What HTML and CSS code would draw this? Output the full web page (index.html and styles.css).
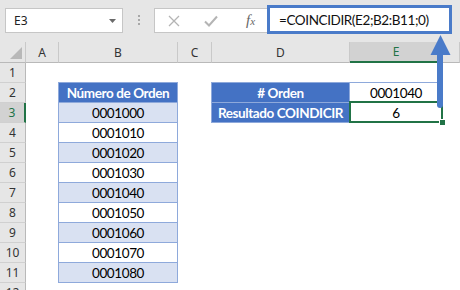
FILE: index.html
```html
<!doctype html>
<html lang="es">
  <head>
    <meta charset="utf-8">
    <title>COINCIDIR</title>
    <link rel="stylesheet" href="styles.css">
  </head>
  <body>
    <div class="excel">
      <div class="toolbar">
        <div class="namebox">
          <span>E3</span>
          <svg class="caret" width="7" height="4" viewBox="0 0 7 4"><path d="M0 0h7L3.5 4z" fill="#6a6a6a"/></svg>
        </div>
        <div class="grip"><i></i><i></i><i></i></div>
        <div class="fx-buttons">
          <svg width="12" height="12" viewBox="0 0 12 12"><path d="M1 1l10 10M11 1L1 11" stroke="#b4b4b4" stroke-width="1.3" fill="none"/></svg>
          <svg width="14" height="12" viewBox="0 0 14 12"><path d="M1 6.5l4 4L13 1.5" stroke="#b4b4b4" stroke-width="2" fill="none"/></svg>
          <span class="fx">f<sub>x</sub></span>
        </div>
        <div class="formula">=COINCIDIR(E2;B2:B11;0)</div>
      </div>

      <div class="sheet">
        <div class="ch corner"><svg width="12" height="12" viewBox="0 0 12 12"><path d="M12 0v12H0z" fill="#b8b8b8"/></svg></div>
        <div class="ch">A</div>
        <div class="ch">B</div>
        <div class="ch">C</div>
        <div class="ch">D</div>
        <div class="ch sel">E</div>
        <div class="ch"></div>

        <div class="rh">1</div><div></div><div></div><div></div><div></div><div></div><div></div>

        <div class="rh">2</div><div></div>
        <div class="t th top">Número de Orden</div>
        <div></div>
        <div class="t th top">#&nbsp;Orden</div>
        <div class="t top">0001040</div>
        <div></div>

        <div class="rh sel">3</div><div></div>
        <div class="t band">0001000</div>
        <div></div>
        <div class="t th">Resultado COINDICIR</div>
        <div class="t active">6</div>
        <div></div>

        <div class="rh">4</div><div></div><div class="t">0001010</div><div></div><div></div><div></div><div></div>
        <div class="rh">5</div><div></div><div class="t band">0001020</div><div></div><div></div><div></div><div></div>
        <div class="rh">6</div><div></div><div class="t">0001030</div><div></div><div></div><div></div><div></div>
        <div class="rh">7</div><div></div><div class="t band">0001040</div><div></div><div></div><div></div><div></div>
        <div class="rh">8</div><div></div><div class="t">0001050</div><div></div><div></div><div></div><div></div>
        <div class="rh">9</div><div></div><div class="t band">0001060</div><div></div><div></div><div></div><div></div>
        <div class="rh">10</div><div></div><div class="t">0001070</div><div></div><div></div><div></div><div></div>
        <div class="rh">11</div><div></div><div class="t band">0001080</div><div></div><div></div><div></div><div></div>
        <div class="rh">12</div><div></div><div></div><div></div><div></div><div></div><div></div>
      </div>

      <!-- annotation arrow pointing from the result up to the formula -->
      <svg class="arrow" width="24" height="74" viewBox="0 0 24 74">
        <path d="M10.5 0L20.5 20H0.5z" fill="#4a7bc9"/>
        <path d="M10 19v51" stroke="#4a7bc9" stroke-width="6" stroke-linecap="round"/>
      </svg>
    </div>
  </body>
</html>
```

FILE: styles.css
```css
body {
  margin: 0;
  font-family: Lato, "Liberation Sans", sans-serif;
}
.excel {
  position: relative;
  width: 460px;
  height: 290px;
  overflow: hidden;
  background: #fff;
}
.toolbar {
  display: flex;
  align-items: flex-start;
  height: 42px;
  background: #e6e6e6;
}
.namebox {
  display: flex;
  align-items: center;
  justify-content: space-between;
  box-sizing: border-box;
  width: 118px;
  height: 25px;
  margin: 8px 0 0 5px;
  padding: 0 6px 0 8px;
  background: #fff;
  border: 1px solid #c6c6c6;
  font-family: "Noto Sans", sans-serif;
  font-size: 12px;
  color: #222;
}
.grip {
  display: flex;
  flex-direction: column;
  align-items: center;
  gap: 2px;
  width: 31px;
  margin-top: 15px;
}
.grip i {
  width: 2px;
  height: 2px;
  background: #a8a8a8;
}
.fx-buttons {
  display: flex;
  align-items: center;
  box-sizing: border-box;
  width: 113px;
  height: 25px;
  margin-top: 8px;
  padding-left: 13px;
  gap: 24px;
  background: #fff;
  border: 1px solid #c6c6c6;
  border-right: 0;
}
.fx {
  font-family: "Liberation Serif", serif;
  font-style: italic;
  font-size: 15px;
  color: #666;
  margin-left: 4px;
}
.fx sub {
  font-size: 11px;
  vertical-align: 0;
}
.formula {
  box-sizing: border-box;
  width: 185px;
  height: 29px;
  margin-top: 5px;
  padding: 4px 0 0 9px;
  background: #fff;
  border: 3px solid #4a7bc9;
  font-size: 13.5px;
  letter-spacing: -0.4px;
  color: #111;
  white-space: nowrap;
}
.sheet {
  display: grid;
  grid-template-columns: 26px 33px 119px 34px 138px 93px 1fr;
  grid-template-rows: 21px;
  grid-auto-rows: 20px;
}
.sheet > div {
  box-sizing: border-box;
}
.ch, .rh {
  display: flex;
  align-items: center;
  justify-content: center;
  background: #e6e6e6;
  font-family: "Noto Sans", sans-serif;
  font-size: 12px;
  color: #333;
}
.ch {
  border-right: 1px solid #c9c9c9;
  border-bottom: 1px solid #b9b9b9;
}
.corner {
  justify-content: flex-end;
  align-items: flex-end;
  padding: 0 3px 3px 0;
}
.rh {
  border-right: 1px solid #b9b9b9;
  border-bottom: 1px solid #d0d0d0;
}
.ch.sel {
  background: #d2d2d2;
  border-bottom: 2px solid #217346;
  color: #217346;
}
.rh.sel {
  background: #d2d2d2;
  border-right: 2px solid #217346;
  color: #217346;
}
.t {
  display: flex;
  align-items: center;
  justify-content: center;
  margin-left: -1px;
  border: 1px solid #8ea9db;
  border-top: 0;
  font-size: 13.5px;
  letter-spacing: -0.4px;
  color: #000;
  white-space: nowrap;
}
.t.top {
  margin-top: -1px;
  border-top: 1px solid #8ea9db;
}
.th {
  background: #4472c4;
  color: #fff;
  font-weight: bold;
}
.band {
  background: #d9e1f2;
}
.active {
  position: relative;
}
.active::after {
  content: "";
  position: absolute;
  left: -1px;
  top: -2px;
  right: -1px;
  bottom: -1px;
  border: 2px solid #217346;
}
.active::before {
  content: "";
  position: absolute;
  right: -4px;
  bottom: -4px;
  width: 5px;
  height: 5px;
  background: #217346;
  border: 1px solid #fff;
  z-index: 1;
}
.arrow {
  position: absolute;
  left: 430px;
  top: 35px;
}
```
